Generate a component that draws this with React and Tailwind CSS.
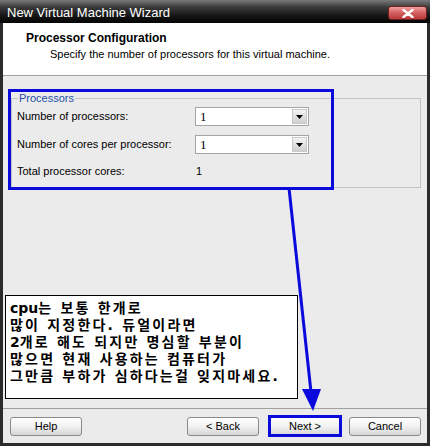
import React from 'react';

const Combo = ({ value }) => (
  <div className="flex h-[19px] w-[114px] items-center border border-[#a5a5a5] bg-white">
    <span className="flex-1 pl-[4px] font-['Liberation_Serif',serif] text-[13px] leading-none text-black">{value}</span>
    <div className="mr-px flex h-[15px] w-[15px] items-center justify-center border border-[#c9c9c9] bg-[linear-gradient(180deg,#f4f4f4,#cfcfcf)]">
      <svg width="7" height="4" viewBox="0 0 7 4">
        <path d="M0 0h7L3.5 4z" fill="#000" />
      </svg>
    </div>
  </div>
);

const Button = ({ children }) => (
  <button
    type="button"
    className="flex h-[19px] w-[72px] items-center justify-center rounded-[3px] border border-[#8a8a8a] bg-[linear-gradient(180deg,#ffffff_0%,#f1f1f1_50%,#d6d6d6_100%)] text-[11px] text-black"
  >
    {children}
  </button>
);

export default function App() {
  return (
    <div className="relative flex h-[446px] w-[430px] flex-col overflow-hidden bg-[#ebebeb] font-['Liberation_Sans',Arial,sans-serif]">
      {/* Title bar */}
      <div className="flex h-[23px] shrink-0 items-center justify-between bg-[linear-gradient(180deg,#7a7a7a_0%,#3c3c3c_30%,#141414_70%,#050505_100%)] pl-[7px] pr-[3px]">
        <span className="mt-[2px] text-[13px] text-white">New Virtual Machine Wizard</span>
        <div className="mt-[3px] flex h-[14px] w-[39px] items-center justify-center rounded-[3px] border border-[#6b2020] bg-[linear-gradient(180deg,#f0a0a0_0%,#d66262_45%,#b83a3a_100%)]">
          <svg width="12" height="9" viewBox="0 0 12 9">
            <path d="M1.5 1l9 7M10.5 1l-9 7" stroke="#fff" strokeWidth="2.4" strokeLinecap="round" />
          </svg>
        </div>
      </div>

      {/* Window body */}
      <div className="flex flex-1 flex-col border-x-[3px] border-b-[3px] border-[#2b2b2b]">
        {/* Header */}
        <div className="h-[53px] shrink-0 border-b border-[#a0a0a0] bg-white pl-[23px] pt-[8px]">
          <div className="text-[12px] font-bold leading-[14px] text-black">Processor Configuration</div>
          <div className="mt-[3px] pl-[24px] text-[11px] leading-[13px] text-black">
            Specify the number of processors for this virtual machine.
          </div>
        </div>

        {/* Content */}
        <div className="flex-1 pl-[8px] pr-[6px] pt-[16px]">
          <fieldset className="h-[96px] border border-[#c3c3c3] pl-[5px]">
            <legend className="ml-[1px] px-[1px] text-[11px] leading-[13px] text-[#1f4fa8]">Processors</legend>
            <div className="mt-[2px] flex items-center">
              <span className="w-[178px] text-[11px] text-black">Number of processors:</span>
              <Combo value="1" />
            </div>
            <div className="mt-[9px] flex items-center">
              <span className="w-[178px] text-[11px] text-black">Number of cores per processor:</span>
              <Combo value="1" />
            </div>
            <div className="mt-[9px] flex items-center">
              <span className="w-[179px] text-[11px] text-black">Total processor cores:</span>
              <span className="text-[11px] text-black">1</span>
            </div>
          </fieldset>
        </div>

        {/* Footer */}
        <div className="h-[35px] shrink-0 border-t border-[#a0a0a0] pl-[7px] pr-[6px] pt-[8px]">
          <div className="flex items-center">
            <Button>Help</Button>
            <div className="flex-1" />
            <Button>&lt; Back</Button>
            <div className="w-[10px]" />
            <Button>Next &gt;</Button>
            <div className="w-[8px]" />
            <Button>Cancel</Button>
          </div>
        </div>
      </div>

      {/* Annotations */}
      <div className="absolute left-[8px] top-[89px] h-[101px] w-[326px] border-[3px] border-[#0a0adc]" />
      <div className="absolute left-[268px] top-[415px] h-[22px] w-[74px] border-[3px] border-[#0a0adc]" />
      <svg className="absolute left-0 top-0" width="430" height="446" viewBox="0 0 430 446">
        <line x1="289" y1="188" x2="311" y2="392" stroke="#0a0adc" strokeWidth="3" />
        <path d="M302 389L321 389L313 411Z" fill="#0a0adc" />
      </svg>
      <div className="absolute left-[5px] top-[295px] h-[104px] w-[293px] border border-black bg-white pl-[4px] pt-[4px] font-['DejaVu_Sans','Noto_Sans_CJK_KR',sans-serif] text-[14px] font-semibold leading-[17px] tracking-[2.2px] text-black">
        <div><b className="tracking-normal">cpu</b>는 보통 한개로</div>
        <div>많이 지정한다. 듀얼이라면</div>
        <div><b className="tracking-normal">2</b>개로 해도 되지만 명심할 부분이</div>
        <div>많으면 현재 사용하는 컴퓨터가</div>
        <div>그만큼 부하가 심하다는걸 잊지마세요.</div>
      </div>
    </div>
  );
}
